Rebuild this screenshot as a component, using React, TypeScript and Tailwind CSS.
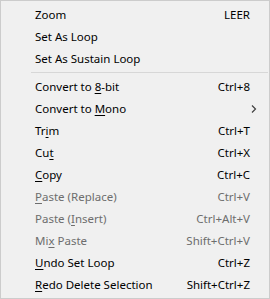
import React from "react";

type Item =
  | { sep: true }
  | { sep?: false; pre: string; u?: string; post?: string; sc?: string; disabled?: boolean; sub?: boolean };

const items: Item[] = [
  { pre: "Zoom", sc: "LEER" },
  { pre: "Set As Loop" },
  { pre: "Set As Sustain Loop" },
  { sep: true },
  { pre: "Convert to ", u: "8", post: "-bit", sc: "Ctrl+8" },
  { pre: "Convert to ", u: "M", post: "ono", sub: true },
  { pre: "Tr", u: "i", post: "m", sc: "Ctrl+T" },
  { pre: "Cu", u: "t", sc: "Ctrl+X" },
  { pre: "", u: "C", post: "opy", sc: "Ctrl+C" },
  { pre: "", u: "P", post: "aste (Replace)", sc: "Ctrl+V", disabled: true },
  { pre: "Paste (", u: "I", post: "nsert)", sc: "Ctrl+Alt+V", disabled: true },
  { pre: "Mi", u: "x", post: " Paste", sc: "Shift+Ctrl+V", disabled: true },
  { pre: "", u: "U", post: "ndo Set Loop", sc: "Ctrl+Z" },
  { pre: "", u: "R", post: "edo Delete Selection", sc: "Shift+Ctrl+Z" },
];

export default function App() {
  return (
    <div
      className="w-[270px] h-[299px] bg-[#f0f0f0] border border-[#cccccc] pt-[2px] pb-[3px] text-[11.5px] leading-[20px]"
      style={{ fontFamily: '"Noto Sans", "Open Sans", sans-serif' }}
    >
      {items.map((it, i) =>
        it.sep ? (
          <div key={i} className="h-[6px] flex items-center pl-[30px] pr-[1px]">
            <div className="h-px w-full bg-[#d7d7d7]" />
          </div>
        ) : (
          <div
            key={i}
            className={`h-[22px] flex items-center pt-[2px] pl-[34px] pr-[19px] ${it.disabled ? "text-[#6d6d6d]" : "text-black"}`}
          >
            <span className="flex-1 whitespace-nowrap">
              {it.pre}
              {it.u && <span className="underline underline-offset-2">{it.u}</span>}
              {it.post}
            </span>
            {it.sc && <span className="whitespace-nowrap">{it.sc}</span>}
            {it.sub && (
              <svg width="8" height="10" viewBox="0 0 8 10" className="mr-[-8px] ml-auto">
                <path d="M2 1.5 L5.5 5 L2 8.5" stroke="#404040" strokeWidth="1.2" fill="none" />
              </svg>
            )}
          </div>
        )
      )}
    </div>
  );
}
